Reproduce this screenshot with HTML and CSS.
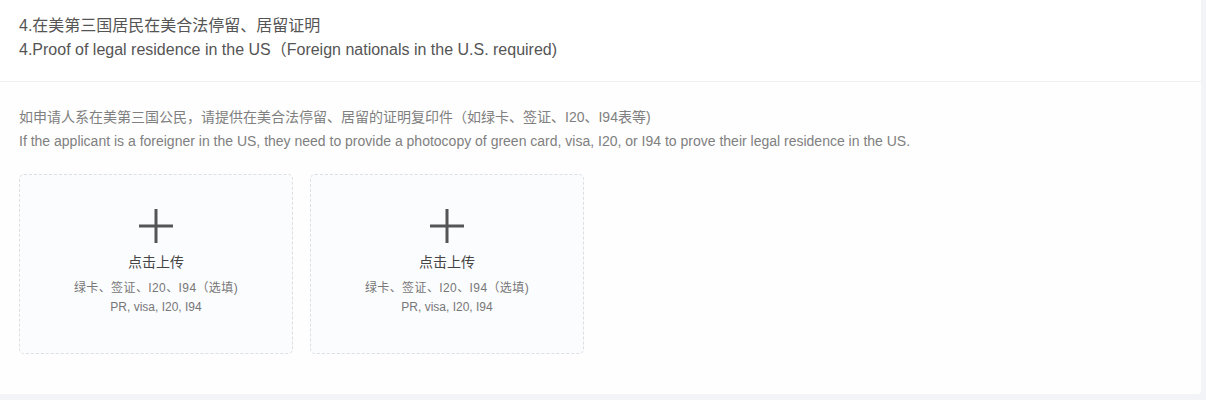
FILE: index.html
```html
<!DOCTYPE html>
<html lang="zh">
<head>
<meta charset="utf-8">
<link rel="stylesheet" href="styles.css">
</head>
<body>
<div class="card">
  <div class="head">
    <div class="head-line">4.在美第三国居民在美合法停留、居留证明</div>
    <div class="head-line">4.Proof of legal residence in the US（Foreign nationals in the U.S. required)</div>
  </div>
  <div class="body">
    <div class="desc">如申请人系在美第三国公民，请提供在美合法停留、居留的证明复印件（如绿卡、签证、I20、I94表等)</div>
    <div class="desc">If the applicant is a foreigner in the US, they need to provide a photocopy of green card, visa, I20, or I94 to prove their legal residence in the US.</div>
    <div class="uploads">
      <div class="upload">
        <svg class="plus" width="34" height="34" viewBox="0 0 34 34"><path d="M17 0V34M0 17H34" stroke="#555" stroke-width="3" fill="none"/></svg>
        <div class="up-title">点击上传</div>
        <div class="up-sub up-cn">绿卡、签证、I20、I94（选填)</div>
        <div class="up-sub">PR, visa, I20, I94</div>
      </div>
      <div class="upload">
        <svg class="plus" width="34" height="34" viewBox="0 0 34 34"><path d="M17 0V34M0 17H34" stroke="#555" stroke-width="3" fill="none"/></svg>
        <div class="up-title">点击上传</div>
        <div class="up-sub up-cn">绿卡、签证、I20、I94（选填)</div>
        <div class="up-sub">PR, visa, I20, I94</div>
      </div>
    </div>
  </div>
</div>
</body>
</html>
```
FILE: styles.css
```css
html, body {
  margin: 0;
  padding: 0;
  background: #f3f4f8;
  font-family: "Liberation Sans", Arial, "Noto Sans CJK SC", sans-serif;
}
.card {
  width: 1201px;
  background: #fff;
  border-radius: 0 0 4px 0;
}
.head {
  padding: 14px 19px 19px;
  border-bottom: 1px solid #eeeeee;
}
.head-line {
  font-size: 16px;
  line-height: 24px;
  color: #555;
}
.body {
  padding: 23px 19px 40px;
  background: #fefefe;
  border-radius: 0 0 4px 0;
}
.desc {
  font-size: 14px;
  line-height: 24px;
  color: #808080;
}
.uploads {
  display: flex;
  gap: 17px;
  margin-top: 21px;
}
.upload {
  box-sizing: border-box;
  width: 274px;
  height: 180px;
  border: 1px dashed #dcdfe4;
  border-radius: 5px;
  background: #fbfcfe;
  display: flex;
  flex-direction: column;
  align-items: center;
  padding-top: 34px;
}
.plus {
  display: block;
}
.up-title {
  margin-top: 9px;
  font-size: 14px;
  line-height: 20px;
  color: #444;
}
.up-sub {
  font-size: 12px;
  line-height: 19px;
  color: #777;
}
.up-cn {
  letter-spacing: 0.4px;
}
.up-title + .up-sub {
  margin-top: 7px;
}
```
